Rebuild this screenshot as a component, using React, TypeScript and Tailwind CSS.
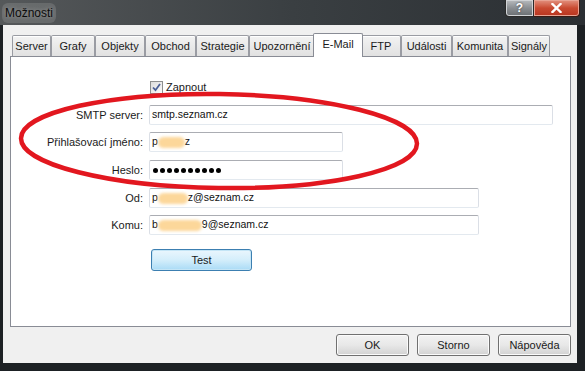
const tabs = [
  { label: 'Server', w: 'w-[39px]' },
  { label: 'Grafy', w: 'w-[44px]' },
  { label: 'Objekty', w: 'w-[50px]' },
  { label: 'Obchod', w: 'w-[51px]' },
  { label: 'Strategie', w: 'w-[53px]' },
  { label: 'Upozornění', w: 'w-[66px]' },
  { label: 'E-Mail', w: 'w-[50px]', active: true },
  { label: 'FTP', w: 'w-[40px]' },
  { label: 'Události', w: 'w-[51px]' },
  { label: 'Komunita', w: 'w-[56px]' },
  { label: 'Signály', w: 'w-[42px]' },
];

function Blob({ w }: { w: string }) {
  return <span className={`inline-block ${w} h-[11px] bg-[#fcd79a] blur-[1.5px] rounded-full align-middle`} />;
}

function Field({ w, children }: { w: string; children?: React.ReactNode }) {
  return (
    <div className={`${w} h-[20px] border border-t-[#abadb3] border-x-[#dbdfe6] border-b-[#e3e9ef] rounded-[2px] bg-white pl-[2px] flex items-center text-[10.5px] text-[#111] whitespace-nowrap`}>
      {children}
    </div>
  );
}

function Row({ label, className, children }: { label: string; className: string; children: React.ReactNode }) {
  return (
    <div className={`flex items-center ${className}`}>
      <div className="w-[132px] text-right text-[11px] text-[#1a1a1a]">{label}</div>
      <div className="ml-[6px]">{children}</div>
    </div>
  );
}

function WinButton({ label }: { label: string }) {
  return (
    <div className="w-[73px] h-[22px] rounded-[3px] border border-[#707070] bg-gradient-to-b from-[#f2f2f2] via-[#e8e8e8] to-[#d2d2d2] shadow-[inset_0_0_0_1px_#fbfbfb] flex items-center justify-center text-[11px] text-[#1a1a1a]">
      {label}
    </div>
  );
}

export default function App() {
  return (
    <div className="relative w-[585px] h-[371px] overflow-hidden flex flex-col bg-[#1d2124] font-['Liberation_Sans',Arial,sans-serif]">
      {/* title bar */}
      <div className="h-[25px] flex items-start justify-between bg-gradient-to-r from-[#55585a] via-[#3a3f42] to-[#2b2f33]">
        <div className="ml-[2px] mt-[3px] px-[3px] py-[1px] text-[12px] text-[#0c0c0c] bg-[#8a8c8d]/40 rounded-[6px] [text-shadow:0_0_4px_#a8a8a8]">Možnosti</div>
        <div className="flex mr-[5px]">
          <div className="w-[29px] h-[17px] rounded-bl-[4px] border border-t-0 border-[#2a2a2a] bg-gradient-to-b from-[#b9bcbf] via-[#8a8e92] to-[#6a6e72] shadow-[inset_0_0_0_1px_#d0d3d6] flex items-center justify-center text-white text-[12px] font-bold [text-shadow:0_0_2px_#333]">?</div>
          <div className="w-[46px] h-[17px] rounded-br-[4px] border border-t-0 border-l-0 border-[#3a1a14] bg-gradient-to-b from-[#e2917f] via-[#c94a31] to-[#b8341f] shadow-[inset_0_0_0_1px_#e8a393] flex items-center justify-center">
            <svg width="11" height="10" viewBox="0 0 11 10">
              <path d="M1.5 1 L9.5 9 M9.5 1 L1.5 9" stroke="#fff" strokeWidth="2.4" strokeLinecap="square" />
            </svg>
          </div>
        </div>
      </div>

      {/* dialog body */}
      <div className="ml-[3px] mr-[8px] h-[338px] bg-[#f0f0f0] pl-[7px] pr-[6px] pt-[8px] pb-[7px] flex flex-col">
        <div className="relative z-10 -mb-px h-[24px] pl-[2px] flex items-end">
          {tabs.map((t) =>
            t.active ? (
              <div key={t.label} className={`${t.w} -mx-[2px] h-[24px] pb-[3px] bg-white border border-b-0 border-[#898c95] rounded-t-[2px] flex items-center justify-center text-[11px] text-[#1a1a1a] relative`}>
                {t.label}
              </div>
            ) : (
              <div key={t.label} className={`${t.w} mb-px h-[21px] bg-gradient-to-b from-[#f3f3f3] to-[#e1e1e1] border border-b-0 border-[#9a9ca3] rounded-t-[2px] shadow-[inset_0_1px_0_#fff] flex items-center justify-center text-[11px] text-[#1a1a1a]`}>
                {t.label}
              </div>
            ),
          )}
        </div>

        <div className="flex-1 bg-white border border-[#898c95] pt-[24px] flex flex-col">
          <div className="flex items-center h-[13px]">
            <div className="w-[132px]" />
            <div className="ml-[7px] flex items-center gap-[3px]">
              <div className="w-[13px] h-[13px] border border-[#8e8f8f] bg-gradient-to-br from-[#dcdcdc] to-[#fbfbfb] flex items-center justify-center">
                <svg width="9" height="9" viewBox="0 0 9 9">
                  <path d="M1 4.5 L3.5 7.2 L8 1" stroke="#4a5f97" strokeWidth="1.8" fill="none" />
                </svg>
              </div>
              <span className="text-[11px] text-[#1a1a1a]">Zapnout</span>
            </div>
          </div>

          <Row label="SMTP server:" className="mt-[11px]">
            <Field w="w-[404px]">smtp.seznam.cz</Field>
          </Row>
          <Row label="Přihlašovací jméno:" className="mt-[7px]">
            <Field w="w-[194px]">
              p<Blob w="w-[27px]" />z
            </Field>
          </Row>
          <Row label="Heslo:" className="mt-[8px]">
            <Field w="w-[194px]">
              <div className="flex gap-[2px] ml-[1px]">
                {Array.from({ length: 10 }).map((_, i) => (
                  <div key={i} className="w-[5px] h-[5px] rounded-full bg-black" />
                ))}
              </div>
            </Field>
          </Row>
          <Row label="Od:" className="mt-[8px]">
            <Field w="w-[330px]">
              p<Blob w="w-[30px]" />z@seznam.cz
            </Field>
          </Row>
          <Row label="Komu:" className="mt-[7px]">
            <Field w="w-[330px]">
              b<Blob w="w-[44px]" />9@seznam.cz
            </Field>
          </Row>

          <div className="flex mt-[14px]">
            <div className="w-[132px]" />
            <div className="ml-[8px] w-[101px] h-[22px] rounded-[3px] border border-[#3c7fb1] bg-gradient-to-b from-[#eaf6fd] via-[#d4eefb] to-[#a9dbf6] shadow-[inset_0_0_0_1px_#c4e5f6] flex items-center justify-center text-[11px] text-[#1a1a1a]">
              Test
            </div>
          </div>
        </div>

        <div className="mt-[7px] flex justify-end gap-[8px]">
          <WinButton label="OK" />
          <WinButton label="Storno" />
          <WinButton label="Nápověda" />
        </div>
      </div>

      {/* red marker drawn over the screenshot */}
      <svg className="absolute inset-0 pointer-events-none" width="585" height="371" viewBox="0 0 585 371">
        <ellipse cx="219" cy="141" rx="198" ry="47" fill="none" stroke="#e2171f" strokeWidth="4.5" transform="rotate(0.8 219 141)" />
      </svg>
    </div>
  );
}
